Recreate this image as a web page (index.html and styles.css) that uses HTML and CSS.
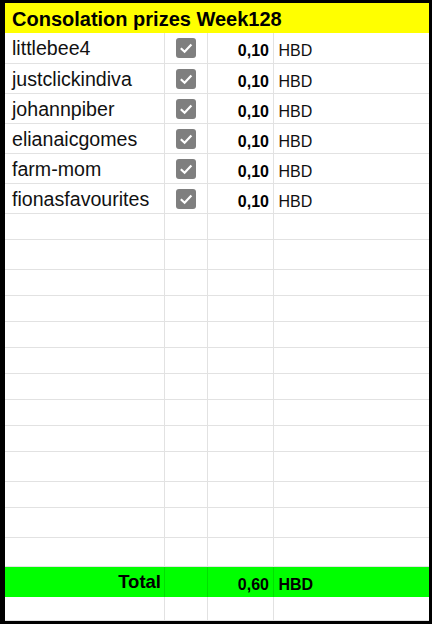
FILE: index.html
```html
<!DOCTYPE html>
<html>
<head>
<meta charset="utf-8">
<link rel="stylesheet" href="styles.css">
</head>
<body>
<div class="frame">
  <div class="title">Consolation prizes Week128</div>
  <div class="row h31"><div class="c name">littlebee4</div><div class="c chk"><span class="box"><svg viewBox="0 0 20 20" width="20" height="20"><path d="M4.8 10.2 L8.6 13.8 L15.4 6.6" fill="none" stroke="#fff" stroke-width="2.2"/></svg></span></div><div class="c num">0,10</div><div class="c cur">HBD</div></div>
  <div class="row h30"><div class="c name">justclickindiva</div><div class="c chk"><span class="box"><svg viewBox="0 0 20 20" width="20" height="20"><path d="M4.8 10.2 L8.6 13.8 L15.4 6.6" fill="none" stroke="#fff" stroke-width="2.2"/></svg></span></div><div class="c num">0,10</div><div class="c cur">HBD</div></div>
  <div class="row h30"><div class="c name">johannpiber</div><div class="c chk"><span class="box"><svg viewBox="0 0 20 20" width="20" height="20"><path d="M4.8 10.2 L8.6 13.8 L15.4 6.6" fill="none" stroke="#fff" stroke-width="2.2"/></svg></span></div><div class="c num">0,10</div><div class="c cur">HBD</div></div>
  <div class="row h30"><div class="c name">elianaicgomes</div><div class="c chk"><span class="box"><svg viewBox="0 0 20 20" width="20" height="20"><path d="M4.8 10.2 L8.6 13.8 L15.4 6.6" fill="none" stroke="#fff" stroke-width="2.2"/></svg></span></div><div class="c num">0,10</div><div class="c cur">HBD</div></div>
  <div class="row h30"><div class="c name">farm-mom</div><div class="c chk"><span class="box"><svg viewBox="0 0 20 20" width="20" height="20"><path d="M4.8 10.2 L8.6 13.8 L15.4 6.6" fill="none" stroke="#fff" stroke-width="2.2"/></svg></span></div><div class="c num">0,10</div><div class="c cur">HBD</div></div>
  <div class="row h30"><div class="c name">fionasfavourites</div><div class="c chk"><span class="box"><svg viewBox="0 0 20 20" width="20" height="20"><path d="M4.8 10.2 L8.6 13.8 L15.4 6.6" fill="none" stroke="#fff" stroke-width="2.2"/></svg></span></div><div class="c num">0,10</div><div class="c cur">HBD</div></div>
  <div class="row h26"><div class="c"></div><div class="c"></div><div class="c"></div><div class="c"></div></div>
  <div class="row h30"><div class="c"></div><div class="c"></div><div class="c"></div><div class="c"></div></div>
  <div class="row h26"><div class="c"></div><div class="c"></div><div class="c"></div><div class="c"></div></div>
  <div class="row h26"><div class="c"></div><div class="c"></div><div class="c"></div><div class="c"></div></div>
  <div class="row h26"><div class="c"></div><div class="c"></div><div class="c"></div><div class="c"></div></div>
  <div class="row h26"><div class="c"></div><div class="c"></div><div class="c"></div><div class="c"></div></div>
  <div class="row h26"><div class="c"></div><div class="c"></div><div class="c"></div><div class="c"></div></div>
  <div class="row h26"><div class="c"></div><div class="c"></div><div class="c"></div><div class="c"></div></div>
  <div class="row h26"><div class="c"></div><div class="c"></div><div class="c"></div><div class="c"></div></div>
  <div class="row h30"><div class="c"></div><div class="c"></div><div class="c"></div><div class="c"></div></div>
  <div class="row h26"><div class="c"></div><div class="c"></div><div class="c"></div><div class="c"></div></div>
  <div class="row h30"><div class="c"></div><div class="c"></div><div class="c"></div><div class="c"></div></div>
  <div class="row h29"><div class="c"></div><div class="c"></div><div class="c"></div><div class="c"></div></div>
  <div class="row h30 total"><div class="c tlabel">Total</div><div class="c"></div><div class="c num">0,60</div><div class="c cur bold">HBD</div></div>
  <div class="row h24"><div class="c"></div><div class="c"></div><div class="c"></div><div class="c"></div></div>
</div>
</body>
</html>
```

FILE: styles.css
```css
html, body {
  margin: 0;
  padding: 0;
  background: #fff;
}
body {
  font-family: "Liberation Sans", Arial, sans-serif;
  color: #000;
}
.frame {
  width: 432px;
  height: 624px;
  box-sizing: border-box;
  border-style: solid;
  border-color: #000;
  border-width: 3px 3px 3px 5px;
  overflow: hidden;
  display: flex;
  flex-direction: column;
}
.title {
  height: 30px;
  flex: none;
  box-sizing: border-box;
  background: #ffff00;
  font-size: 20px;
  font-weight: bold;
  line-height: 24px;
  padding: 4px 0 0 7px;
  white-space: nowrap;
}
.row {
  display: flex;
  flex: none;
}
.h31 { height: 31px; }
.h30 { height: 30px; }
.h29 { height: 29px; }
.h26 { height: 26px; }
.h24 { height: 24px; }
.c {
  box-sizing: border-box;
  border-right: 1px solid #e2e2e2;
  border-bottom: 1px solid #e2e2e2;
  white-space: nowrap;
  overflow: hidden;
}
.c:nth-child(1) { width: 160px; }
.c:nth-child(2) { width: 43px; }
.c:nth-child(3) { width: 66px; }
.c:nth-child(4) { width: 155px; border-right: none; }
.name {
  font-size: 19.6px;
  line-height: 22px;
  padding: 4px 0 0 7px;
  color: #111;
}
.chk {
  display: flex;
  justify-content: center;
  padding-top: 5px;
}
.box {
  width: 20px;
  height: 20px;
  background: #7f7f7f;
  border-radius: 3px;
  display: block;
}
.box svg { display: block; }
.num {
  font-size: 16px;
  font-weight: bold;
  line-height: 20px;
  text-align: right;
  padding: 8px 4px 0 0;
}
.cur {
  font-size: 16px;
  line-height: 20px;
  padding: 8px 0 0 4.5px;
  color: #111;
}
.bold { font-weight: bold; color: #000; }
.total .c {
  background: #00ff00;
  border-bottom: none;
  border-right-color: #00e000;
}
.total .c:nth-child(4) { border-right: none; }
.tlabel {
  font-size: 18.5px;
  font-weight: bold;
  line-height: 22px;
  text-align: right;
  padding: 4px 3px 0 0;
}
```
